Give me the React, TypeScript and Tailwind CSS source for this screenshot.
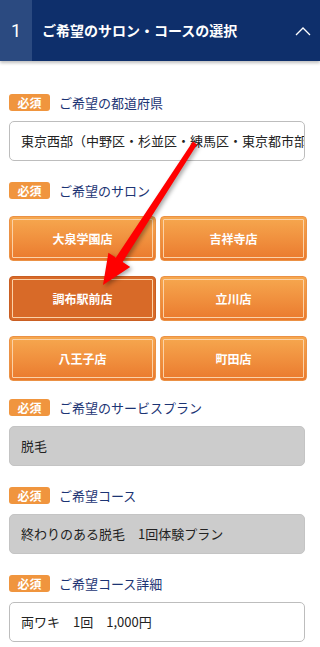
import React from 'react';

const salons = [
  { name: '大泉学園店', active: false },
  { name: '吉祥寺店', active: false },
  { name: '調布駅前店', active: true },
  { name: '立川店', active: false },
  { name: '八王子店', active: false },
  { name: '町田店', active: false },
];

function FieldLabel({ text }: { text: string }) {
  return (
    <div className="flex h-[17px] items-center">
      <span className="flex h-[17px] w-[41px] items-center justify-center rounded-[3px] bg-[#f0953e] text-[12px] font-bold leading-none text-white">
        必須
      </span>
      <span className="ml-[9px] text-[13px] leading-none text-[#1c3474]">{text}</span>
    </div>
  );
}

function SelectBox({ value, disabled }: { value: string; disabled?: boolean }) {
  return (
    <div
      className={
        'mr-[2px] mt-[10px] flex h-[40px] items-center overflow-hidden whitespace-nowrap rounded-[5px] border pl-[11px] text-[13px] text-[#222] ' +
        (disabled ? 'border-[#c4c4c4] bg-[#cccccc]' : 'border-[#bdbdbd] bg-white')
      }
    >
      {value}
    </div>
  );
}

export default function App() {
  return (
    <div className="relative h-[647px] w-[320px] overflow-hidden bg-white font-['Noto_Sans_CJK_JP','Noto_Sans',sans-serif]">
      <header className="flex h-[61px] bg-[#0e2f6b] text-white shadow-[0_2px_3px_rgba(0,0,0,0.25)]">
        <div className="flex w-[32px] items-center justify-center bg-[#2b4a80] text-[18px] font-[Roboto,sans-serif]">1</div>
        <h1 className="ml-[10px] flex-1 self-center text-[14px] font-bold">ご希望のサロン・コースの選択</h1>
        <svg className="mr-[9px] self-center" width="16" height="10" viewBox="0 0 16 10">
          <polyline points="1,9 8,2 15,9" fill="none" stroke="white" strokeWidth="1.3" />
        </svg>
      </header>

      <main className="pl-[9px] pr-[13px] pt-[33px]">
        <FieldLabel text="ご希望の都道府県" />
        <SelectBox value="東京西部（中野区・杉並区・練馬区・東京都市部）" />

        <div className="mt-[21px]">
          <FieldLabel text="ご希望のサロン" />
        </div>
        <div className="mt-[17px] grid grid-cols-2 gap-x-[4px] gap-y-[15px]">
          {salons.map((s) => (
            <button
              key={s.name}
              className={
                'flex h-[45px] items-center justify-center rounded-[4px] border text-[12px] font-bold text-white outline-1 -outline-offset-4 outline-[#fbd2a8] ' +
                (s.active
                  ? 'border-[#c95e22] bg-[#d86a28]'
                  : 'border-[#eb9145] bg-gradient-to-b from-[#f6a84f] to-[#ea792d]')
              }
            >
              {s.name}
            </button>
          ))}
        </div>

        <div className="mt-[18px]">
          <FieldLabel text="ご希望のサービスプラン" />
        </div>
        <SelectBox value="脱毛" disabled />

        <div className="mt-[21px]">
          <FieldLabel text="ご希望コース" />
        </div>
        <SelectBox value="終わりのある脱毛　1回体験プラン" disabled />

        <div className="mt-[21px]">
          <FieldLabel text="ご希望コース詳細" />
        </div>
        <SelectBox value="両ワキ　1回　1,000円" />
      </main>

      {/* red pointer arrow drawn over the form */}
      <svg
        className="pointer-events-none absolute left-0 top-0 drop-shadow-[2px_2px_2px_rgba(0,0,0,0.35)]"
        width="320"
        height="647"
        viewBox="0 0 320 647"
      >
        <polygon
          points="197.1,144.4 122.7,262 130.2,266.9 103,285 108.4,252.7 115.9,257.6 192.9,141.6"
          fill="#ff0000"
        />
      </svg>
    </div>
  );
}
